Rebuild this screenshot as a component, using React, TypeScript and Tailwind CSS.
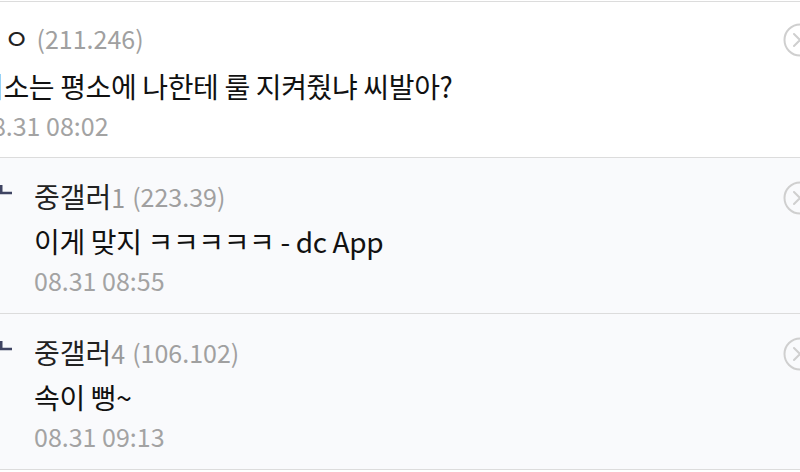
import React from "react";

type Row = {
  name: string;
  suffix?: string;
  ip: string;
  text: string;
  date: string;
  reply: boolean;
};

const rows: Row[] = [
  { name: "ㅇㅇ", ip: "(211.246)", text: "니소는 평소에 나한테 룰 지켜줬냐 씨발아?", date: "08.31 08:02", reply: false },
  { name: "중갤러", suffix: "1", ip: "(223.39)", text: "이게 맞지 ㅋㅋㅋㅋㅋ - dc App", date: "08.31 08:55", reply: true },
  { name: "중갤러", suffix: "4", ip: "(106.102)", text: "속이 뻥~", date: "08.31 09:13", reply: true },
];

function CloseIcon() {
  return (
    <svg width="34" height="34" viewBox="0 0 34 34" className="shrink-0 -mr-[17px] ml-auto mt-[3px]">
      <circle cx="17" cy="17" r="15.5" fill="none" stroke="#cfcfcf" strokeWidth="2" />
      <path d="M11 11 L23 23 M23 11 L11 23" stroke="#cfcfcf" strokeWidth="2" strokeLinecap="round" />
    </svg>
  );
}

function ReplyArrow() {
  return (
    <svg width="12" height="20" viewBox="0 0 12 20" className="shrink-0 -ml-[34px] mr-[22px] -mt-[3px]">
      <path d="M1.25 0 V8 M0 8 H12" stroke="#3f4462" strokeWidth="2.5" fill="none" />
    </svg>
  );
}

export default function App() {
  return (
    <div
      className="w-[800px] h-[472px] overflow-hidden bg-white"
      style={{ fontFamily: '"Noto Sans CJK KR", "Noto Sans", sans-serif' }}
    >
      <div className="mt-[1px] border-t border-[#dcdcdc]">
        {rows.map((r, i) => (
          <div
            key={i}
            className={`h-[156px] border-b border-[#dcdcdc] pl-[34px] ${
              r.reply ? "bg-[#f9fafc] pt-[21px]" : "bg-white pt-[19px]"
            }`}
          >
            <div className={`flex items-center h-[34px] ${r.reply ? "" : "-ml-[56px]"}`}>
              {r.reply && <ReplyArrow />}
              <span className="text-[25px] leading-[34px] text-[#222222] whitespace-nowrap">
                <span className="text-[28px]">{r.name}</span>
                {r.suffix && <span className="text-[#999999]">{r.suffix}</span>}
              </span>
              <span className="ml-[7px] text-[25px] leading-[34px] text-[#a0a0a0] whitespace-nowrap">
                {r.ip}
              </span>
              <CloseIcon />
            </div>
            <div
              className={`h-[34px] text-[28px] leading-[34px] tracking-[-0.35px] text-[#111111] whitespace-nowrap ${
                r.reply ? "mt-[11px]" : "mt-[14px] -ml-[56px]"
              }`}
            >
              {r.text}
            </div>
            <div
              className={`mt-[5px] h-[34px] text-[25px] leading-[34px] text-[#a3a3a3] whitespace-nowrap ${
                r.reply ? "" : "-ml-[56px]"
              }`}
            >
              {r.date}
            </div>
          </div>
        ))}
      </div>
    </div>
  );
}
